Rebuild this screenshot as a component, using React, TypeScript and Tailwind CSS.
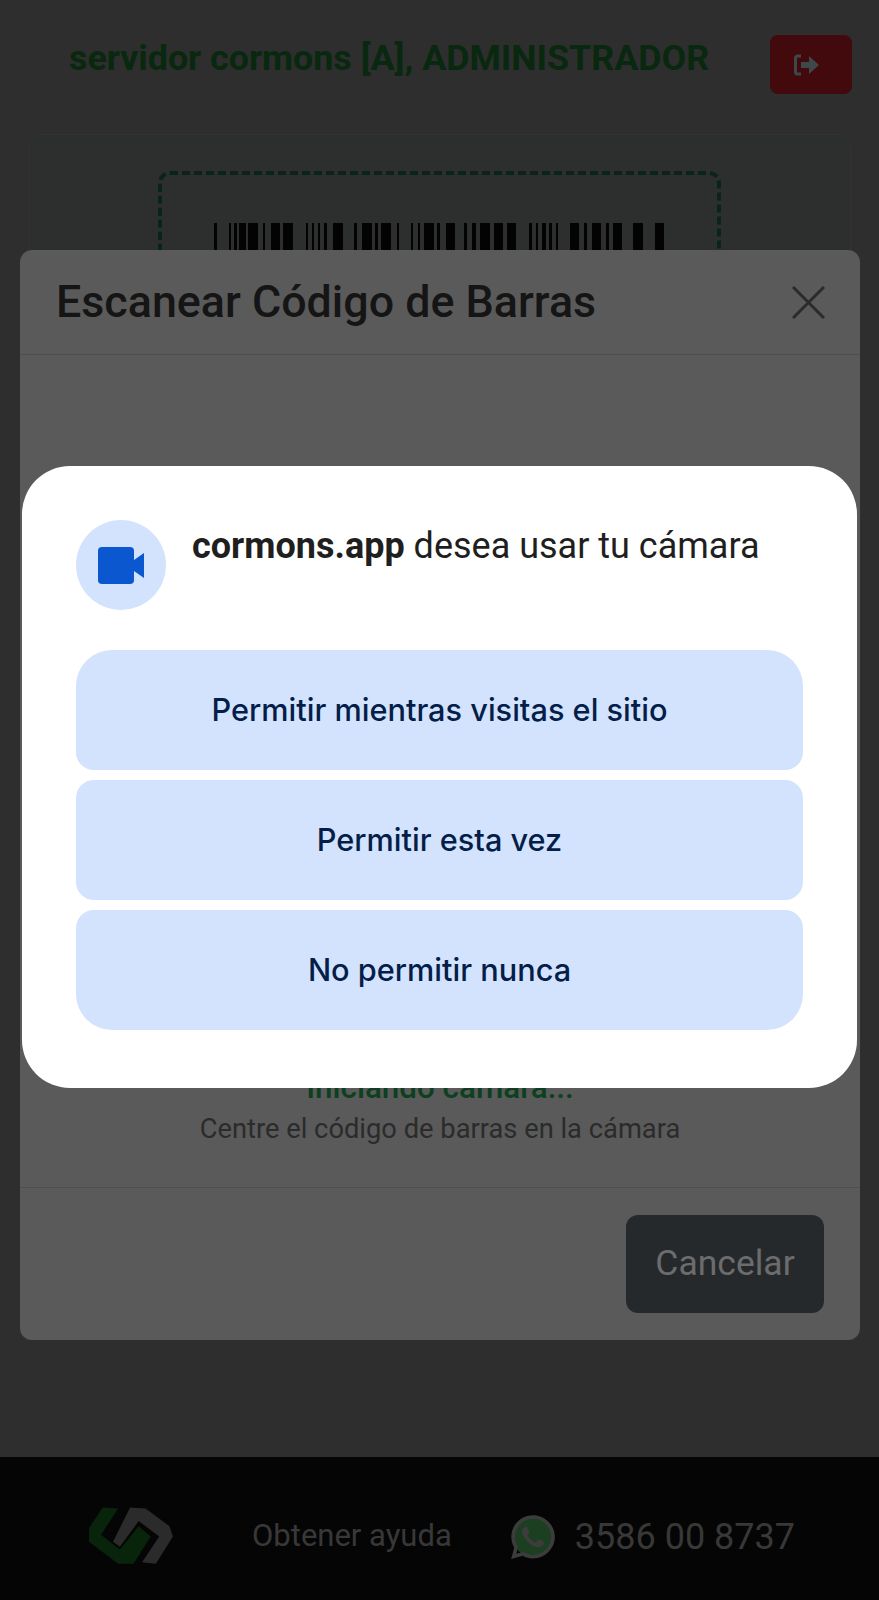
import { FaWhatsapp } from "react-icons/fa";

const BARS: [number, number][] = [
  [214, 217], [229, 231], [234, 237], [239, 246], [248, 258], [263, 265], [271, 280], [283, 293],
  [306, 308], [312, 314], [318, 320], [324, 327], [333, 343], [354, 357], [362, 372], [375, 378],
  [381, 391], [397, 399], [411, 413], [418, 420], [424, 434], [437, 440], [446, 455], [464, 467],
  [472, 476], [480, 490], [494, 503], [507, 516], [529, 532], [536, 538], [542, 546], [549, 552],
  [556, 558], [570, 579], [584, 587], [592, 601], [606, 609], [613, 622], [633, 643], [655, 664],
];

const OPCIONES = [
  { label: "Permitir mientras visitas el sitio", radius: "rounded-t-[36px] rounded-b-[18px]" },
  { label: "Permitir esta vez", radius: "rounded-[18px]" },
  { label: "No permitir nunca", radius: "rounded-t-[18px] rounded-b-[36px]" },
];

function Barcode() {
  return (
    <svg width="452" height="60" viewBox="214 0 452 60" className="block">
      {BARS.map(([a, b]) => (
        <rect key={a} x={a} y="0" width={b - a} height="60" fill="#030303" />
      ))}
    </svg>
  );
}

function Logo() {
  return (
    <svg width="92" height="65" viewBox="50 35 265 190" className="block">
      <polygon points="100,45 145,48 95,125 150,168 205,100 240,130 190,210 145,210 60,145 60,105" fill="#08250b" />
      <polygon points="180,45 225,48 295,100 305,130 255,210 215,205 265,130 205,85 150,160 130,145" fill="#2b2b2b" />
    </svg>
  );
}

export default function App() {
  return (
    <div className="relative h-[1600px] overflow-hidden bg-[#2e2e2e] font-['Roboto',sans-serif]">
      <div className="h-[1457px]">
        <header className="flex h-[118px] border-b border-[#303030] pl-[69px] pr-[27px] pt-[35px]">
          <h1 className="flex-1 text-[35.800px] leading-[46px] font-bold whitespace-nowrap text-[#08280f]">
            servidor cormons [A], ADMINISTRADOR
          </h1>
          <button className="flex h-[59px] w-[82px] shrink-0 items-center justify-center rounded-lg bg-[#420a0c] pr-[8px]">
            <svg width="28" height="24" viewBox="0 0 28 24" fill="none">
              <path d="M8 3H4.500A2 2 0 0 0 2.500 5v14a2 2 0 0 0 2 2H8" stroke="#3f4848" strokeWidth="3" />
              <path d="M8 9h8V3l10 9-10 9v-6H8z" fill="#3f4848" />
            </svg>
          </button>
        </header>
        <section className="mx-[28px] mt-[16px] h-[1000px] rounded-xl border border-[#323232] bg-[#2d2e2e] px-[129px] pt-[36px]">
          <div className="h-[300px] rounded-xl border-[4px] border-dashed border-[#08241d] pl-[52px] pt-[48px]">
            <Barcode />
          </div>
        </section>
      </div>

      <footer className="flex h-[143px] items-center bg-[#050505] pl-[85px] pt-[16px]">
        <Logo />
        <span className="ml-[75px] text-[31px] text-[#383838]">Obtener ayuda</span>
        <span className="relative ml-[56px] h-[50px] w-[50px]">
          <span className="absolute inset-[5px] rounded-full bg-[#1b3f20]" />
          <FaWhatsapp className="absolute inset-0 h-[50px] w-[50px] text-[#3c3c3c]" />
        </span>
        <span className="ml-[17px] text-[36px] text-[#383838]">3586 00 8737</span>
      </footer>

      {/* modal del escaner */}
      <div className="absolute left-[20px] top-[250px] flex h-[1090px] w-[840px] flex-col rounded-xl bg-[#5a5a5a]">
        <div className="flex h-[105px] shrink-0 items-center justify-between border-b border-[#4f4f4f] pl-[36px] pr-[35px]">
          <h2 className="text-[44.800px] font-medium text-[#151515]">Escanear Código de Barras</h2>
          <svg width="33" height="33" viewBox="0 0 33 33" stroke="#2b2b2b" strokeWidth="3">
            <path d="M1 1l31 31M32 1L1 32" />
          </svg>
        </div>
        <div className="flex flex-1 flex-col items-center justify-end pb-[38px]">
          <p className="text-[31.400px] leading-[42px] font-medium text-[#0c4020]">Iniciando cámara...</p>
          <p className="text-[27.300px] leading-[40px] text-[#2b2b2b]">Centre el código de barras en la cámara</p>
        </div>
        <div className="flex h-[153px] shrink-0 justify-end border-t border-[#4f4f4f] pr-[36px] pt-[27px]">
          <button className="h-[98px] w-[198px] rounded-xl bg-[#26292c] text-[35.500px] text-[#6c6c6c]">Cancelar</button>
        </div>
      </div>

      {/* permiso del navegador */}
      <div className="absolute left-[22px] top-[466px] h-[622px] w-[835px] rounded-[48px] bg-white px-[54px] pt-[54px]">
        <div className="flex items-start">
          <div className="flex h-[90px] w-[90px] shrink-0 items-center justify-center rounded-full bg-[#d3e3fd]">
            <svg width="46" height="37" viewBox="0 0 46 37" className="mr-[1px]">
              <rect x="0" y="0" width="36" height="37" rx="4" fill="#0b57d0" />
              <path d="M36 13L46 6V31L36 24z" fill="#0b57d0" />
            </svg>
          </div>
          <p className="ml-[26px] mt-[2px] text-[36px] leading-[48px] whitespace-nowrap text-[#1f1f1f]">
            <span className="font-bold">cormons.app</span> desea usar tu cámara
          </p>
        </div>
        <div className="mt-[40px] flex flex-col gap-[10px]">
          {OPCIONES.map((o) => (
            <button
              key={o.label}
              className={`h-[120px] bg-[#d3e3fd] font-['Inter',sans-serif] text-[30.700px] font-medium text-[#041e49] ${o.radius}`}
            >
              {o.label}
            </button>
          ))}
        </div>
      </div>
    </div>
  );
}
